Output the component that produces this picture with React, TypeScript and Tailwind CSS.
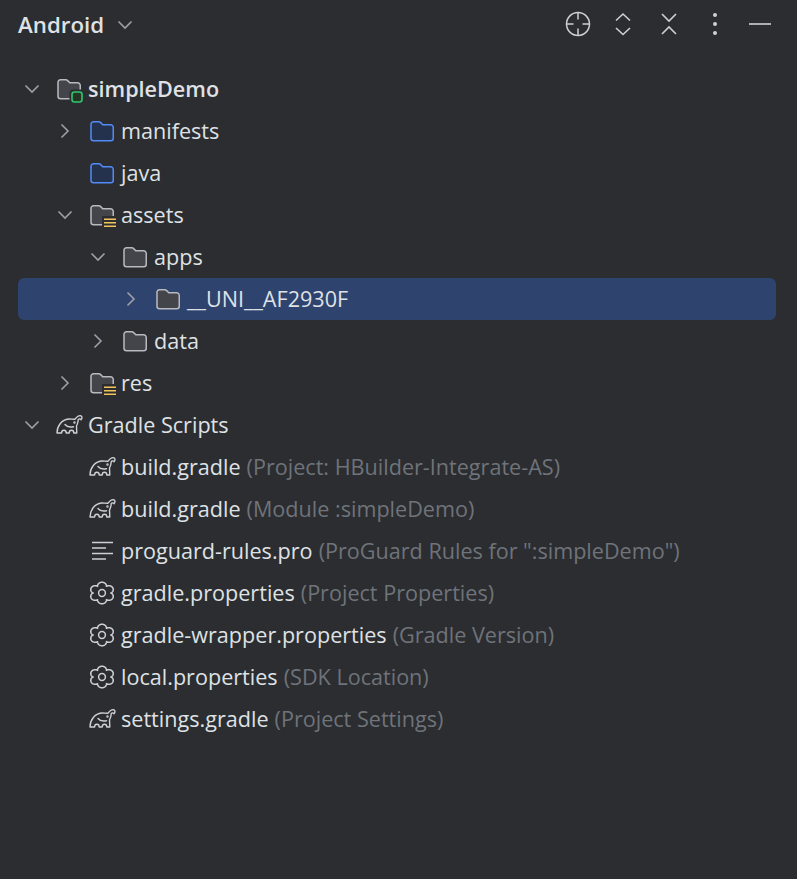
type FolderKind = 'plain' | 'source' | 'module' | 'resource';

const Chevron = ({ open }: { open: boolean }) => (
  <svg width="16" height="16" viewBox="0 0 16 16" fill="none" stroke="#9da0a8" strokeWidth="1.6">
    {open ? <path d="M1.5 4.5 8 11l6.5-6.5" /> : <path d="M4.5 1.5 11 8l-6.5 6.5" />}
  </svg>
);

const FolderIcon = ({ kind }: { kind: FolderKind }) => {
  const blue = kind === 'source';
  return (
    <svg width="24" height="24" viewBox="0 0 24 24" className="overflow-visible">
      <path
        d="M3.5 2.75h5.4c.6 0 1.1.25 1.5.65l2.4 2.35h7.7a2.75 2.75 0 0 1 2.75 2.75v10.75a2.5 2.5 0 0 1-2.5 2.5H3.5a2.5 2.5 0 0 1-2.5-2.5V5.25a2.5 2.5 0 0 1 2.5-2.5z"
        fill={blue ? '#25324d' : '#43454a'}
        stroke={blue ? '#548af7' : '#b8babf'}
        strokeWidth="1.5"
      />
      {kind === 'module' && (
        <>
          <rect x="12.5" y="12.5" width="15" height="15" rx="4" fill="#2b2d30" />
          <rect x="15" y="15" width="10" height="10" rx="2.5" fill="#253627" stroke="#2fc76e" strokeWidth="1.6" />
        </>
      )}
      {kind === 'resource' && (
        <>
          <rect x="12" y="13" width="16" height="14" fill="#2b2d30" />
          <path d="M14 16.25h12M14 19.75h12M14 23.25h12" stroke="#f2c55c" strokeWidth="1.6" />
        </>
      )}
    </svg>
  );
};

const GradleIcon = () => (
  <svg width="27" height="24" viewBox="0 0 27 24" fill="none" stroke="#ced0d6" strokeWidth="1.4" strokeLinejoin="round" strokeLinecap="round" className="shrink-0">
    <path d="M1 20C1 13 6 6.5 12.5 6c2.5-.2 4 .4 6.500.2 1.500-2 3.500-3.800 5.500-3.500 1.800.3 2 2.500.5 4-.8-1-2-1.200-2.700-.2-.2 2.300-.6 4.500-1.800 6.500L20.800 20h-3c0-1.800-1-2.700-2.300-2.700s-2.300.9-2.300 2.700h-3c0-1.800-1-2.700-2.300-2.700s-2.300.9-2.300 2.700H1z" />
    <path d="M9 11.500c2 2.500 5 3 8.500 2.200" />
    <circle cx="18.500" cy="9.500" r="0.5" />
  </svg>
);

const LinesIcon = () => (
  <svg width="24" height="24" viewBox="0 0 24 24" stroke="#ced0d6" strokeWidth="1.4">
    <path d="M2 3.5h21M2 9h14M2 14.5h21M2 20h14" />
  </svg>
);

// six rounded lobes with sharp valleys, sampled round the centre
const gearPath = Array.from({ length: 144 }, (_, i) => {
  const a = (i / 144) * Math.PI * 2;
  const r = 8 + 3.2 * Math.pow(Math.abs(Math.sin(3 * a)), 0.7);
  return `${i === 0 ? 'M' : 'L'}${(12 + r * Math.cos(a) * 1.1).toFixed(2)} ${(12 + r * Math.sin(a) * 0.96).toFixed(2)}`;
}).join('') + 'z';

const GearIcon = () => (
  <svg width="24" height="24" viewBox="0 0 24 24" fill="none" stroke="#ced0d6" strokeWidth="1.5" strokeLinejoin="round">
    <path d={gearPath} />
    <circle cx="12" cy="12" r="3.4" />
  </svg>
);

type Row = {
  pad: string;
  open?: boolean;
  icon: React.ReactNode;
  name: string;
  hint?: string;
  bold?: boolean;
  selected?: boolean;
};

const rows: Row[] = [
  { pad: 'pl-0', open: true, icon: <FolderIcon kind="module" />, name: 'simpleDemo', bold: true },
  { pad: 'pl-[33px]', open: false, icon: <FolderIcon kind="source" />, name: 'manifests' },
  { pad: 'pl-[33px]', icon: <FolderIcon kind="source" />, name: 'java' },
  { pad: 'pl-[33px]', open: true, icon: <FolderIcon kind="resource" />, name: 'assets' },
  { pad: 'pl-[66px]', open: true, icon: <FolderIcon kind="plain" />, name: 'apps' },
  { pad: 'pl-[99px]', open: false, icon: <FolderIcon kind="plain" />, name: '__UNI__AF2930F', selected: true },
  { pad: 'pl-[66px]', open: false, icon: <FolderIcon kind="plain" />, name: 'data' },
  { pad: 'pl-[33px]', open: false, icon: <FolderIcon kind="resource" />, name: 'res' },
  { pad: 'pl-0', open: true, icon: <GradleIcon />, name: 'Gradle Scripts' },
  { pad: 'pl-[33px]', icon: <GradleIcon />, name: 'build.gradle', hint: '(Project: HBuilder-Integrate-AS)' },
  { pad: 'pl-[33px]', icon: <GradleIcon />, name: 'build.gradle', hint: '(Module :simpleDemo)' },
  { pad: 'pl-[33px]', icon: <LinesIcon />, name: 'proguard-rules.pro', hint: '(ProGuard Rules for ":simpleDemo")' },
  { pad: 'pl-[33px]', icon: <GearIcon />, name: 'gradle.properties', hint: '(Project Properties)' },
  { pad: 'pl-[33px]', icon: <GearIcon />, name: 'gradle-wrapper.properties', hint: '(Gradle Version)' },
  { pad: 'pl-[33px]', icon: <GearIcon />, name: 'local.properties', hint: '(SDK Location)' },
  { pad: 'pl-[33px]', icon: <GradleIcon />, name: 'settings.gradle', hint: '(Project Settings)' },
];

const TreeRow = ({ row }: { row: Row }) => (
  <div className={`flex h-[42px] items-center rounded-md ${row.pad} ${row.selected ? 'bg-[#2e436e]' : ''}`}>
    <div className="flex w-[28px] shrink-0 justify-center">
      {row.open !== undefined && <Chevron open={row.open} />}
    </div>
    <div className="ml-[11px] flex w-[24px] shrink-0 justify-center">{row.icon}</div>
    <span className={`ml-[7px] whitespace-nowrap ${row.bold ? 'font-semibold' : ''}`}>{row.name}</span>
    {row.hint && <span className="ml-[6px] whitespace-nowrap text-[#6f737a]">{row.hint}</span>}
  </div>
);

export default function App() {
  return (
    <div className="h-[879px] w-[797px] overflow-hidden bg-[#2b2d30] font-['Open_Sans',sans-serif] text-[21.6px] text-[#dfe1e5]">
      <div className="flex h-[50px] items-center justify-between pl-[18px] pr-[14px]">
        <div className="flex items-center gap-[13px]">
          <span className="text-[22.3px] font-semibold">Android</span>
          <Chevron open />
        </div>
        <div className="flex items-center pb-[2px] text-[#ced0d6]">
          <div className="flex w-[46px] justify-center">
            <svg width="26" height="26" viewBox="0 0 26 26" fill="none" stroke="currentColor" strokeWidth="1.5">
              <circle cx="13" cy="13" r="11.5" />
              <path d="M13 1.5v7M13 17.5v7M1.5 13h7M17.5 13h7" />
            </svg>
          </div>
          <div className="flex w-[44px] justify-center">
            <svg width="24" height="26" viewBox="0 0 24 26" fill="none" stroke="currentColor" strokeWidth="1.6">
              <path d="M5 9.5 12 3l7 6.5M5 17l7 6.5 7-6.5" />
            </svg>
          </div>
          <div className="flex w-[47px] justify-center">
            <svg width="24" height="26" viewBox="0 0 24 26" fill="none" stroke="currentColor" strokeWidth="1.6">
              <path d="M5 3l7 7 7-7M5 23l7-7 7 7" />
            </svg>
          </div>
          <div className="flex w-[45px] justify-center">
            <svg width="6" height="24" viewBox="0 0 6 24" fill="currentColor">
              <circle cx="3" cy="3" r="2" />
              <circle cx="3" cy="12" r="2" />
              <circle cx="3" cy="21" r="2" />
            </svg>
          </div>
          <div className="flex w-[46px] justify-center">
            <svg width="24" height="4" viewBox="0 0 24 4" stroke="currentColor" strokeWidth="1.6">
              <path d="M1 2h22" />
            </svg>
          </div>
        </div>
      </div>
      <div className="ml-[18px] mr-[21px] mt-[18px]">
        {rows.map((row, i) => (
          <TreeRow key={i} row={row} />
        ))}
      </div>
    </div>
  );
}
